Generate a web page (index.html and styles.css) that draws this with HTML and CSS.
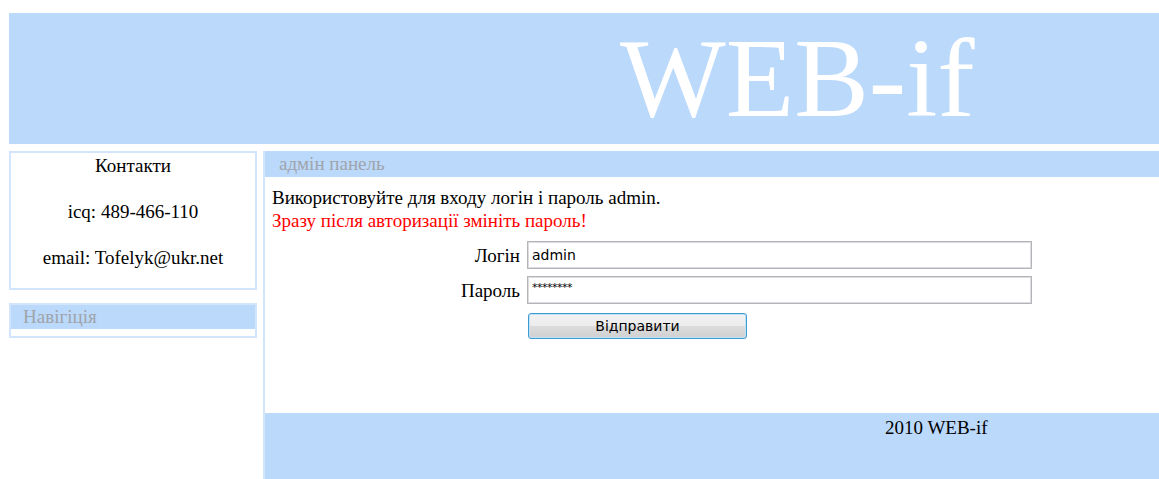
FILE: index.html
```html
<!DOCTYPE html>
<html lang="uk">
<head>
<meta charset="utf-8">
<title>WEB-if — адмін панель</title>
<link rel="stylesheet" href="styles.css">
</head>
<body>
<div class="page">
  <header class="banner">WEB-if</header>
  <div class="layout">
    <aside class="sidebar">
      <div class="box contacts">
        Контакти<br><br>
        icq: 489-466-110<br><br>
        email: Tofelyk@ukr.net
      </div>
      <div class="box nav">
        <div class="box-title">Навігіція</div>
        <div class="nav-body"></div>
      </div>
    </aside>
    <main class="content">
      <div class="content-title">адмін панель</div>
      <div class="content-body">
        <p class="note">Використовуйте для входу логін і пароль admin.</p>
        <p class="warning">Зразу після авторизації змініть пароль!</p>
        <form class="login" action="#" method="post">
          <label class="login-label" for="login">Логін</label>
          <input class="login-input" id="login" type="text" value="admin">
          <label class="login-label" for="pass">Пароль</label>
          <input class="login-input masked" id="pass" type="text" value="********">
          <span></span>
          <button class="login-submit" type="submit">Відправити</button>
        </form>
      </div>
      <footer class="footer">2010 WEB-if</footer>
    </main>
  </div>
</div>
</body>
</html>
```
FILE: styles.css
```css
html, body {
  margin: 0;
  padding: 0;
  background: #ffffff;
  overflow: hidden;
}

body {
  font-family: "Liberation Serif", "DejaVu Serif", "Times New Roman", serif;
  font-size: 19px;
  line-height: 23px;
  color: #000000;
}

.page {
  padding: 13px 0 0 9px;
}

/* top banner */
.banner {
  height: 131px;
  background: #bbd9fb;
  color: #ffffff;
  font-size: 112px;
  line-height: 131px;
  padding-left: 611px;
  box-sizing: border-box;
  white-space: nowrap;
}

.layout {
  display: flex;
  margin-top: 7px;
  align-items: stretch;
}

/* left column */
.sidebar {
  width: 248px;
  flex: none;
  display: flex;
  flex-direction: column;
  gap: 13px;
}

.box {
  border: 2px solid #d2e5fc;
}

.contacts {
  height: 139px;
  box-sizing: border-box;
  padding-top: 1px;
  text-align: center;
}

.box-title {
  height: 24px;
  line-height: 24px;
  background: #bbd9fb;
  color: #a0a4ab;
  padding-left: 12px;
}

.nav-body {
  height: 7px;
}

/* main column */
.content {
  flex: 1;
  margin-left: 6px;
  border-left: 2px solid #d2e5fc;
  display: flex;
  flex-direction: column;
}

.content-title {
  height: 26px;
  line-height: 25px;
  background: #bbd9fb;
  color: #a0a4ab;
  padding-left: 14px;
}

.content-body {
  height: 236px;
  box-sizing: border-box;
  padding: 9px 0 0 7px;
}

.content-body p {
  margin: 0;
}

.warning {
  color: #ff0000;
}

/* login form */
.login {
  display: grid;
  grid-template-columns: 248px 505px;
  column-gap: 7px;
  row-gap: 7px;
  align-items: center;
  margin-top: 9px;
}

.login-label {
  text-align: right;
}

.login-input {
  height: 28px;
  box-sizing: border-box;
  margin: 0;
  padding: 0 4px;
  border: 1px solid #b4b4b9;
  box-shadow: inset 0 0 0 1px #dcdce0;
  font-family: "DejaVu Sans", Tahoma, sans-serif;
  font-size: 14px;
  color: #000000;
  background: #ffffff;
  outline: none;
}

.login-input.masked {
  font-size: 11px;
  letter-spacing: -0.5px;
  padding-bottom: 5px;
}

.login-submit {
  width: 219px;
  height: 26px;
  margin: 2px 0 0 1px;
  padding: 0;
  border: 1px solid #3f9ad4;
  border-radius: 3px;
  box-shadow: inset 0 0 0 1px #bfe4f8;
  background: linear-gradient(#f3f3f3 0%, #ececec 48%, #dcdcdc 52%, #d0d0d0 100%);
  font-family: "DejaVu Sans", Tahoma, sans-serif;
  font-size: 14px;
  color: #000000;
}

/* page footer */
.footer {
  height: 66px;
  box-sizing: border-box;
  background: #bbd9fb;
  padding: 3px 0 0 620px;
  font-size: 19px;
  white-space: nowrap;
}
```
